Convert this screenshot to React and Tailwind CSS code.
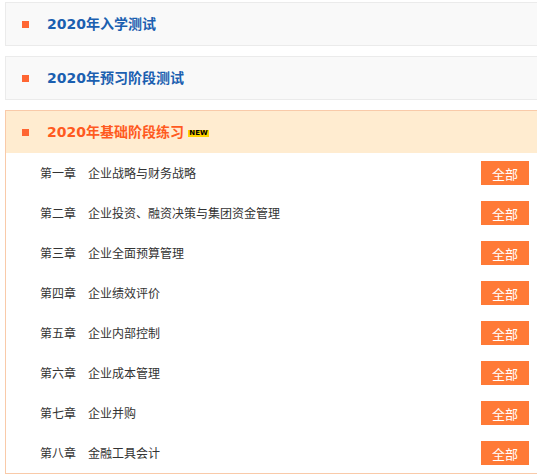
const CHAPTERS = [
  ["第一章", "企业战略与财务战略"],
  ["第二章", "企业投资、融资决策与集团资金管理"],
  ["第三章", "企业全面预算管理"],
  ["第四章", "企业绩效评价"],
  ["第五章", "企业内部控制"],
  ["第六章", "企业成本管理"],
  ["第七章", "企业并购"],
  ["第八章", "金融工具会计"],
];

const FONT = { fontFamily: '"Microsoft YaHei", "Noto Sans CJK SC", "Noto Sans", sans-serif' };
const TITLE_FONT = { fontFamily: '"DejaVu Sans", "Noto Sans CJK SC", sans-serif' };

function SectionHeader({ title, active, badge }) {
  return (
    <div className="flex h-[42px] items-center pl-4">
      <span className="h-[7px] w-[7px] bg-[#ff6633]" />
      <span
        className={`ml-[18px] text-[14px] font-bold leading-none ${
          active ? "text-[#ff5a1f]" : "text-[#1b5fb0]"
        }`}
        style={TITLE_FONT}
      >
        {title}
      </span>
      {badge ? (
        <span
          className="ml-[4px] mt-[2px] inline-flex h-[7px] w-[21px] items-center justify-center bg-[#ffd400] text-[7px] font-bold leading-none text-black"
          style={{ fontFamily: '"DejaVu Sans", sans-serif' }}
        >
          NEW
        </span>
      ) : null}
    </div>
  );
}

export default function App() {
  return (
    <div className="h-[476px] w-[537px] overflow-hidden bg-white pl-[5px] pt-[2px]" style={FONT}>
      <div className="w-[548px] border border-[#ebebeb] bg-[#f9f9f9]">
        <SectionHeader title="2020年入学测试" />
      </div>

      <div className="mt-[10px] w-[548px] border border-[#ebebeb] bg-[#f9f9f9]">
        <SectionHeader title="2020年预习阶段测试" />
      </div>

      <div className="mt-[10px] w-[548px] border border-[#f9caa9] bg-white">
        <div className="bg-[#ffecd0]">
          <SectionHeader title="2020年基础阶段练习" active badge />
        </div>
        <ul>
          {CHAPTERS.map(([chapter, name]) => (
            <li key={chapter} className="flex h-[40px] items-center justify-between pl-[34px] pr-[23px]">
              <p className="text-[12px] leading-none text-[#333333]">
                <span className="mr-3">{chapter}</span>
                {name}
              </p>
              <button
                type="button"
                className="flex h-[24px] w-[48px] items-center justify-center bg-[#ff7a36] text-[13px] leading-none text-white"
              >
                全部
              </button>
            </li>
          ))}
        </ul>
      </div>
    </div>
  );
}
